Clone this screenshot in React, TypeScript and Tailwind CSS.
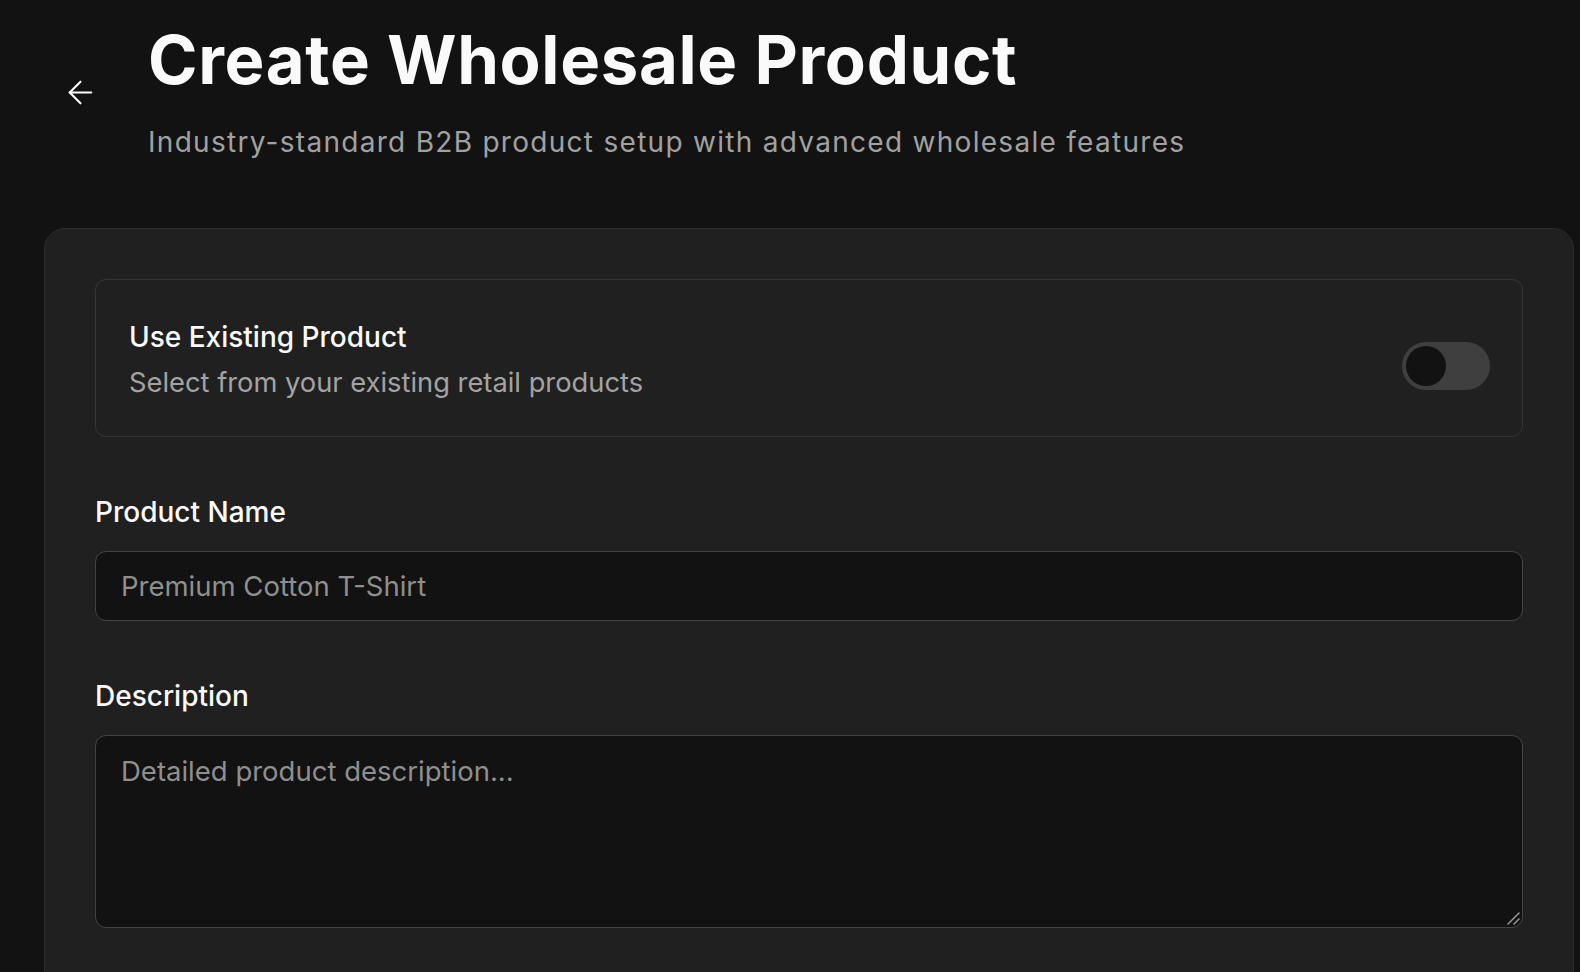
import React, { useState } from "react";
import { ArrowLeft } from "lucide-react";

const App = () => {
  const [useExisting, setUseExisting] = useState(false);

  return (
    <div className="min-h-screen bg-[#121212] pl-[44px] pr-[6px] pt-[23px] font-['Inter','Liberation_Sans',sans-serif] text-[#fafafa]">
      {/* header */}
      <div className="flex items-start">
        <button className="mt-[51px] ml-[18px] mr-[49px] text-[#fafafa]">
          <ArrowLeft size={37} strokeWidth={1.35} />
        </button>
        <div className="flex flex-col">
          <h1 className="text-[67px] font-bold leading-[74px] tracking-[0.01em]">
            Create Wholesale Product
          </h1>
          <p className="mt-[24px] text-[28px] leading-[42px] tracking-[0.046em] text-[#a1a1a1]">
            Industry-standard B2B product setup with advanced wholesale features
          </p>
        </div>
      </div>

      {/* form card */}
      <div className="mt-[65px] rounded-[21px] border border-[#2c2c2c] bg-[#202020] px-[50px] pt-[50px] pb-[80px]">
        <div className="flex items-start justify-between rounded-[11px] border border-[#363636] pl-[33px] pr-[32px] pt-[36px] pb-[32px]">
          <div className="flex flex-col gap-[4px]">
            <p className="text-[28px] font-medium leading-[42px]">Use Existing Product</p>
            <p className="text-[27.3px] leading-[42px] text-[#a3a3a3]">
              Select from your existing retail products
            </p>
          </div>
          <button
            onClick={() => setUseExisting(!useExisting)}
            className="mt-[26px] flex h-[48px] w-[88px] items-center rounded-full bg-[#3f3f3f] px-[4px]"
          >
            <span
              className={
                useExisting
                  ? "h-[40px] w-[40px] translate-x-[40px] rounded-full bg-[#fafafa]"
                  : "h-[40px] w-[40px] rounded-full bg-[#121212]"
              }
            />
          </button>
        </div>

        <div className="mt-[54px] flex flex-col gap-[18px]">
          <label className="text-[28px] font-medium leading-[42px]">Product Name</label>
          <input
            className="h-[70px] w-full rounded-[11px] border border-[#444] bg-[#121212] px-[25px] text-[27.5px] text-[#fafafa] outline-none placeholder:text-[#8f8f8f]"
            placeholder="Premium Cotton T-Shirt"
          />
        </div>

        <div className="mt-[54px] flex flex-col gap-[18px]">
          <label className="text-[28px] font-medium leading-[42px]">Description</label>
          <div className="relative">
            <textarea
              className="block h-[193px] w-full resize-none rounded-[11px] border border-[#444] bg-[#121212] px-[25px] py-[14px] text-[27.5px] leading-[42px] text-[#fafafa] outline-none placeholder:text-[#8f8f8f]"
              placeholder="Detailed product description..."
            />
            <svg
              className="pointer-events-none absolute bottom-[3px] right-[3px]"
              width="14"
              height="14"
              viewBox="0 0 14 14"
              fill="none"
              stroke="#9a9a9a"
              strokeWidth="1.5"
              strokeLinecap="round"
            >
              <path d="M2 13 L13 2" />
              <path d="M8 13 L13 8" />
            </svg>
          </div>
        </div>
      </div>
    </div>
  );
};

export default App;
